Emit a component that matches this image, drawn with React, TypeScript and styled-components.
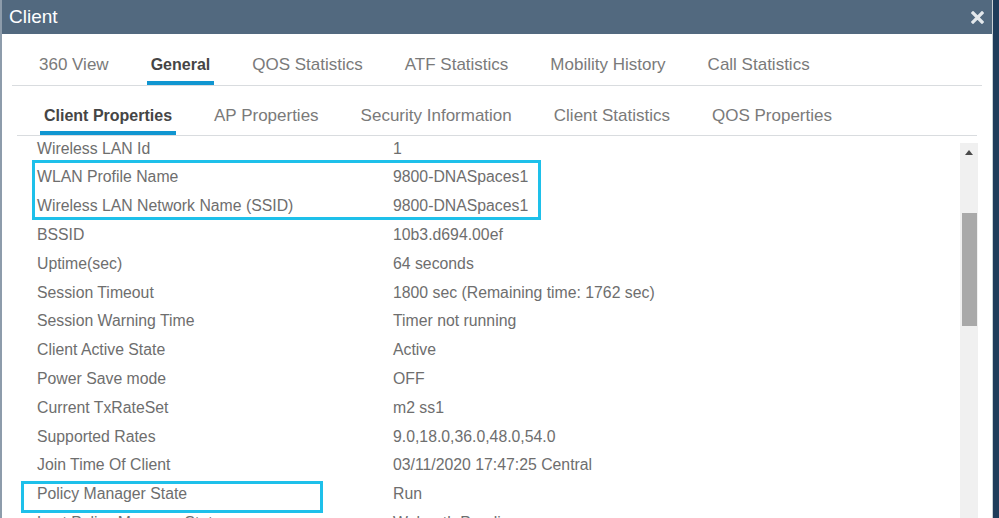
import React from "react";
import styled, { createGlobalStyle } from "styled-components";

const GlobalStyle = createGlobalStyle`
  html, body {
    margin: 0;
    padding: 0;
    background: #1f3c5a;
    font-family: "Liberation Sans", Arial, sans-serif;
  }
`;

const Dialog = styled.div`
  width: 993px;
  height: 518px;
  box-sizing: border-box;
  background: #fff;
  border-left: 2px solid #8d9cab;
  border-right: 1px solid #c9cfd4;
  display: flex;
  flex-direction: column;
  overflow: hidden;
`;

const Header = styled.div`
  height: 34px;
  flex: none;
  margin-left: -2px;
  background: #52697f;
  display: flex;
  align-items: center;
  justify-content: space-between;
  padding: 0 7px 0 9px;
`;

const Title = styled.span`
  color: #fff;
  font-size: 19px;
  line-height: 34px;
`;

const Close = styled.button`
  border: 0;
  background: transparent;
  padding: 0;
  width: 16px;
  height: 16px;
  display: flex;
  align-items: center;
  justify-content: center;
  cursor: pointer;
`;

const TabBar = styled.div<{ $inset: number }>`
  flex: none;
  display: flex;
  gap: 34px;
  margin: 0 ${(p) => p.$inset}px;
  padding-left: 23px;
  border-bottom: 1px solid #d9dcdf;
`;

const Tab = styled.div<{ $active?: boolean; $top: number; $bottom: number }>`
  padding: ${(p) => p.$top}px 4px ${(p) => p.$bottom}px;
  font-size: ${(p) => (p.$active ? 16 : 17)}px;
  line-height: 20px;
  white-space: nowrap;
  color: ${(p) => (p.$active ? "#454545" : "#7a7a7a")};
  font-weight: ${(p) => (p.$active ? "bold" : "normal")};
  border-bottom: 4px solid ${(p) => (p.$active ? "#1196d1" : "transparent")};
`;

const Content = styled.div`
  flex: 1;
  position: relative;
  display: flex;
  overflow: hidden;
`;

const List = styled.div`
  flex: 1;
  margin-top: -1.4px;
  padding-left: 35px;
`;

const Row = styled.div`
  display: grid;
  grid-template-columns: 356px 1fr;
  height: 28.8px;
  line-height: 28.8px;
  font-size: 15.8px;
  color: #6e6e6e;
  white-space: nowrap;
`;

const Scrollbar = styled.div`
  flex: none;
  width: 18px;
  margin: 7px 14px 0 0;
  background: #f0f0f0;
  display: flex;
  flex-direction: column;
  align-items: center;
`;

const Arrow = styled.div`
  margin-top: 7px;
  width: 0;
  height: 0;
  border-left: 4px solid transparent;
  border-right: 4px solid transparent;
  border-bottom: 5px solid #4a4a4a;
`;

const Thumb = styled.div`
  margin-top: 58px;
  width: 15px;
  height: 113px;
  background: #a9a9a9;
`;

const Highlight = styled.div`
  position: absolute;
  box-sizing: border-box;
  border: 3px solid #1ec0ea;
  pointer-events: none;
`;

const mainTabs = [
  "360 View",
  "General",
  "QOS Statistics",
  "ATF Statistics",
  "Mobility History",
  "Call Statistics",
];

const subTabs = [
  "Client Properties",
  "AP Properties",
  "Security Information",
  "Client Statistics",
  "QOS Properties",
];

const rows: [string, string][] = [
  ["Wireless LAN Id", "1"],
  ["WLAN Profile Name", "9800-DNASpaces1"],
  ["Wireless LAN Network Name (SSID)", "9800-DNASpaces1"],
  ["BSSID", "10b3.d694.00ef"],
  ["Uptime(sec)", "64 seconds"],
  ["Session Timeout", "1800 sec (Remaining time: 1762 sec)"],
  ["Session Warning Time", "Timer not running"],
  ["Client Active State", "Active"],
  ["Power Save mode", "OFF"],
  ["Current TxRateSet", "m2 ss1"],
  ["Supported Rates", "9.0,18.0,36.0,48.0,54.0"],
  ["Join Time Of Client", "03/11/2020 17:47:25 Central"],
  ["Policy Manager State", "Run"],
  ["Last Policy Manager State", "Webauth Pending"],
];

export default function App() {
  return (
    <>
      <GlobalStyle />
      <Dialog>
        <Header>
          <Title>Client</Title>
          <Close aria-label="Close">
            <svg width="13" height="13" viewBox="0 0 13 13">
              <path
                d="M2 2 L11 11 M11 2 L2 11"
                stroke="#e3e8ec"
                strokeWidth="3.2"
                strokeLinecap="square"
              />
            </svg>
          </Close>
        </Header>

        <TabBar $inset={10}>
          {mainTabs.map((t) => (
            <Tab key={t} $active={t === "General"} $top={21} $bottom={6}>
              {t}
            </Tab>
          ))}
        </TabBar>

        <TabBar $inset={15}>
          {subTabs.map((t) => (
            <Tab key={t} $active={t === "Client Properties"} $top={20} $bottom={5}>
              {t}
            </Tab>
          ))}
        </TabBar>

        <Content>
          <List>
            {rows.map(([label, value]) => (
              <Row key={label}>
                <span>{label}</span>
                <span>{value}</span>
              </Row>
            ))}
          </List>
          <Scrollbar>
            <Arrow />
            <Thumb />
          </Scrollbar>
          <Highlight style={{ left: 30, top: 24, width: 509, height: 60 }} />
          <Highlight style={{ left: 19, top: 345, width: 302, height: 32 }} />
        </Content>
      </Dialog>
    </>
  );
}
